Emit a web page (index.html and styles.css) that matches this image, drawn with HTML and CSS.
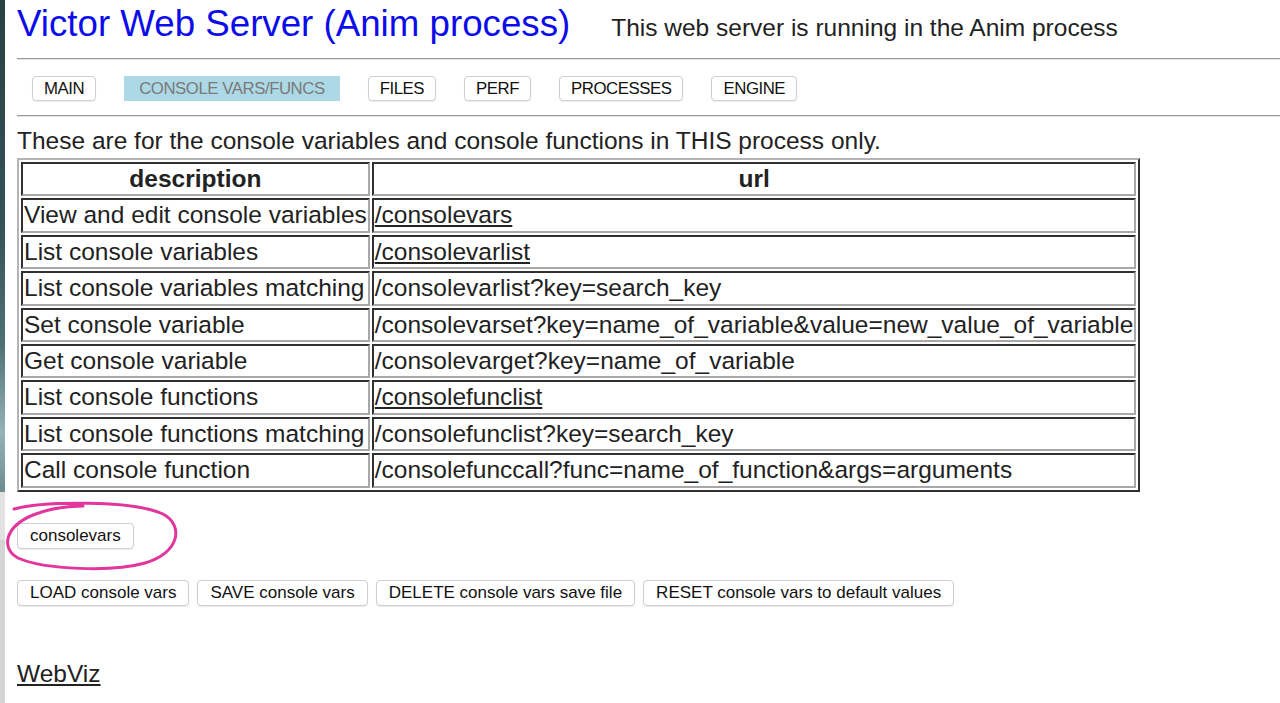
FILE: index.html
```html
<!DOCTYPE html>
<html lang="en">
<head>
<meta charset="utf-8">
<title>Victor Web Server (Anim process)</title>
<link rel="stylesheet" href="styles.css">
</head>
<body>
<div class="edge">
  <div class="edge-top"></div>
  <div class="edge-bottom"></div>
</div>
<div class="page">
  <header class="header">
    <h1 class="title">Victor Web Server (Anim process)</h1>
    <span class="tagline">This web server is running in the Anim process</span>
  </header>
  <hr class="rule">
  <nav class="nav">
    <button class="nav-btn">MAIN</button>
    <button class="nav-btn active">CONSOLE VARS/FUNCS</button>
    <button class="nav-btn">FILES</button>
    <button class="nav-btn">PERF</button>
    <button class="nav-btn">PROCESSES</button>
    <button class="nav-btn">ENGINE</button>
  </nav>
  <hr class="rule">
  <p class="intro">These are for the console variables and console functions in THIS process only.</p>
  <table class="cmds">
    <tr><th>description</th><th>url</th></tr>
    <tr><td>View and edit console variables</td><td><a href="#">/consolevars</a></td></tr>
    <tr><td>List console variables</td><td><a href="#">/consolevarlist</a></td></tr>
    <tr><td>List console variables matching</td><td>/consolevarlist?key=search_key</td></tr>
    <tr><td>Set console variable</td><td>/consolevarset?key=name_of_variable&amp;value=new_value_of_variable</td></tr>
    <tr><td>Get console variable</td><td>/consolevarget?key=name_of_variable</td></tr>
    <tr><td>List console functions</td><td><a href="#">/consolefunclist</a></td></tr>
    <tr><td>List console functions matching</td><td>/consolefunclist?key=search_key</td></tr>
    <tr><td>Call console function</td><td>/consolefunccall?func=name_of_function&amp;args=arguments</td></tr>
  </table>
  <div class="cv-wrap">
    <button class="btn">consolevars</button>
    <svg class="circle" width="186" height="72" viewBox="0 0 186 72" aria-hidden="true">
      <path d="M 11 8 C 40 0, 130 -1, 160 13 C 181 24, 177 52, 142 62 C 110 71, 42 69, 15 57 C -2 48, 1 26, 30 14 C 45 8, 62 5, 80 5" fill="none" stroke="#e2369c" stroke-width="3" stroke-linecap="round"/>
    </svg>
  </div>
  <div class="actions">
    <button class="btn">LOAD console vars</button>
    <button class="btn">SAVE console vars</button>
    <button class="btn">DELETE console vars save file</button>
    <button class="btn">RESET console vars to default values</button>
  </div>
  <p class="footer-link"><a href="#">WebViz</a></p>
</div>
</body>
</html>
```
FILE: styles.css
```css
html, body {
  margin: 0;
  padding: 0;
  background: #ffffff;
}

body {
  display: flex;
  min-height: 703px;
  font-family: "Liberation Sans", Arial, Helvetica, sans-serif;
  color: #222222;
  overflow: hidden;
}

.edge {
  width: 5px;
  flex: none;
  display: flex;
  flex-direction: column;
}

.edge-top {
  height: 492px;
  background: linear-gradient(#2a4144 0%, #345256 45%, #4f7175 70%, #93b3b8 88%, #6d8c90 100%);
}

.edge-bottom {
  flex: 1;
  background: #d4d4d4;
  border-top: 48px solid #e2e2e2;
}

.page {
  flex: 1;
  padding-left: 12px;
}

.header {
  display: flex;
  align-items: baseline;
  gap: 41px;
  padding-top: 4px;
}

.title {
  margin: 0;
  font-size: 36.7px;
  line-height: 40px;
  font-weight: normal;
  color: #0c0cea;
}

.tagline {
  font-size: 24.5px;
  line-height: 28px;
  color: #222222;
}

.rule {
  margin: 14px 0 0;
  height: 0;
  border: none;
  border-top: 1px solid #9a9a9a;
  border-bottom: 1px solid #e4e4e4;
}

.nav {
  display: flex;
  gap: 28px;
  padding-left: 15px;
  margin-top: 16px;
}

.nav-btn {
  height: 25px;
  padding: 0 11px;
  font-family: "Liberation Sans", Arial, Helvetica, sans-serif;
  font-size: 16.8px;
  letter-spacing: -0.45px;
  line-height: 23px;
  color: #111111;
  background: #ffffff;
  border: 1px solid #cfcfcf;
  border-radius: 4px;
  box-shadow: 0 1px 1px rgba(0, 0, 0, 0.08);
}

.nav-btn.active {
  background: #add8e6;
  color: #7a7a7a;
  border-color: #add8e6;
  border-radius: 0;
  box-shadow: none;
  padding: 0 14px;
}

.intro {
  margin: 10px 0 0;
  font-size: 24.5px;
  line-height: 28px;
}

.cmds {
  margin-top: 3px;
  border-collapse: separate;
  border-spacing: 2px;
  border: 2px solid;
  border-color: #b4b4b4 #303030 #303030 #b4b4b4;
  font-size: 24.5px;
}

.cmds th,
.cmds td {
  border: 2px solid;
  border-color: #303030 #a8a8a8 #a8a8a8 #303030;
  padding: 1px;
  line-height: 28.4px;
  text-align: left;
  white-space: nowrap;
  color: #222222;
}

.cmds th {
  text-align: center;
  font-weight: bold;
}

.cmds a,
.footer-link a {
  color: #222222;
  text-decoration: underline;
}

.cv-wrap {
  position: relative;
  display: flex;
  margin-top: 31px;
}

.circle {
  position: absolute;
  left: -14px;
  top: -22px;
  pointer-events: none;
}

.btn {
  height: 26px;
  padding: 0 12px;
  font-family: "Liberation Sans", Arial, Helvetica, sans-serif;
  font-size: 17px;
  line-height: 24px;
  color: #111111;
  background: #ffffff;
  border: 1px solid #cfcfcf;
  border-radius: 4px;
  box-shadow: 0 1px 1px rgba(0, 0, 0, 0.08);
}

.actions {
  display: flex;
  gap: 8px;
  margin-top: 31px;
}

.footer-link {
  margin: 54px 0 0;
  font-size: 24.5px;
  line-height: 28px;
}
```
